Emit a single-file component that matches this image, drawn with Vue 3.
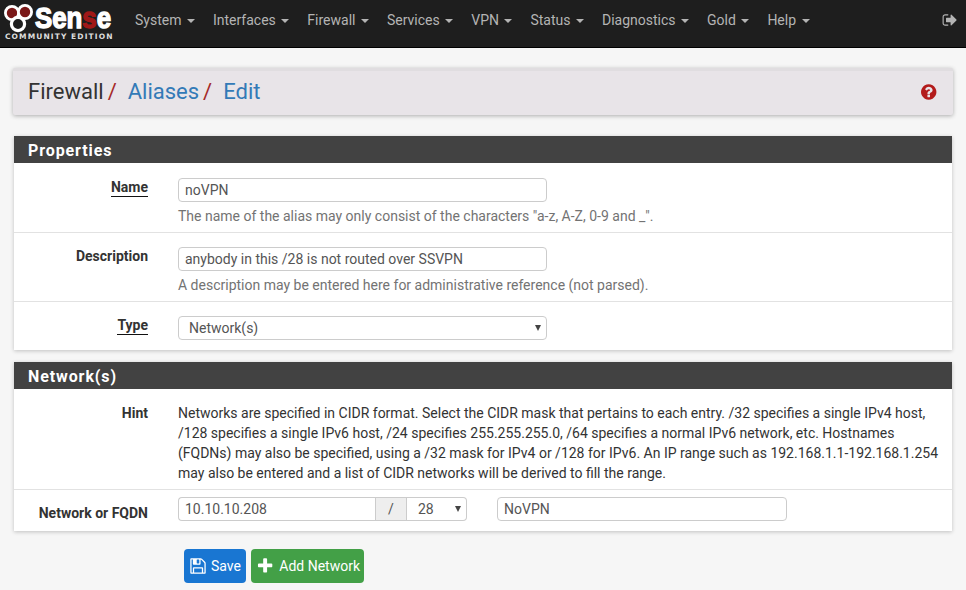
<script setup>
const menus = ['System', 'Interfaces', 'Firewall', 'Services', 'VPN', 'Status', 'Diagnostics', 'Gold', 'Help']
</script>

<template>
  <div class="page">
    <header class="navbar">
      <a class="brand">
        <span class="logo-top">
          <svg class="gears" viewBox="0 0 30 30" width="30" height="30">
            <circle cx="8" cy="10" r="6.6" fill="#7a1818" stroke="#fff" stroke-width="2.8" />
            <circle cx="21" cy="9" r="6.6" fill="#7a1818" stroke="#fff" stroke-width="2.8" />
            <circle cx="14" cy="21" r="6.6" fill="#1e1e1e" stroke="#fff" stroke-width="3.2" />
          </svg>
          <span class="wordmark">Sen<i>s</i>e</span>
        </span>
        <span class="edition">COMMUNITY EDITION</span>
      </a>
      <nav class="menu">
        <a v-for="m in menus" :key="m" class="item">{{ m }}<b class="caret"></b></a>
      </nav>
      <svg class="logout" viewBox="0 0 1792 1792" width="16" height="16" fill="#b4b4b4">
        <path d="M704 1440q0 4 1 20t.5 26.5-3 23.5-10 19.5-20.5 6.5h-320q-119 0-203.5-84.5t-84.5-203.5v-704q0-119 84.5-203.5t203.5-84.5h320q13 0 22.5 9.5t9.5 22.5q0 4 1 20t.5 26.5-3 23.5-10 19.5-20.5 6.5h-320q-66 0-113 47t-47 113v704q0 66 47 113t113 47h312l11.5 1 11.5 3 8 5.5 7 9 2 13.5zm928-544q0 26-19 45l-544 544q-19 19-45 19t-45-19-19-45v-288h-448q-26 0-45-19t-19-45v-384q0-26 19-45t45-19h448v-288q0-26 19-45t45-19 45 19l544 544q19 19 19 45z" />
      </svg>
    </header>

    <main class="container">
      <div class="crumbs">
        <h1>
          <span>Firewall</span><em>/</em><a>Aliases</a><em>/</em><a>Edit</a>
        </h1>
        <svg viewBox="0 0 1792 1792" width="18" height="18" fill="#b31b1b">
          <path d="M896 1376v-192q0-14-9-23t-23-9h-192q-14 0-23 9t-9 23v192q0 14 9 23t23 9h192q14 0 23-9t9-23zm256-672q0-88-55.5-163t-138.5-116-170-41q-243 0-371 213-15 24 8 42l132 100q7 6 19 6 16 0 25-12 53-68 86-92 34-24 86-24 48 0 85.5 26t37.5 59q0 38-20 61t-68 45q-63 28-115.5 86.5t-52.5 125.5v36q0 14 9 23t23 9h192q14 0 23-9t9-23q0-19 21.5-49.5t54.5-49.5q32-18 49-28.5t46-35 44.5-48 28-60.5 12.5-81zm384 192q0 209-103 385.5t-279.5 279.5-385.5 103-385.5-103-279.5-279.5-103-385.5 103-385.5 279.5-279.5 385.5-103 385.5 103 279.5 279.5 103 385.5z" />
        </svg>
      </div>

      <section class="panel">
        <h2>Properties</h2>
        <div class="row tall">
          <label class="lbl req">Name</label>
          <div class="field">
            <input class="ctl wide" value="noVPN" />
            <p class="help">The name of the alias may only consist of the characters "a-z, A-Z, 0-9 and _".</p>
          </div>
        </div>
        <div class="row tall">
          <label class="lbl desc">Description</label>
          <div class="field">
            <input class="ctl wide" value="anybody in this /28 is not routed over SSVPN" />
            <p class="help">A description may be entered here for administrative reference (not parsed).</p>
          </div>
        </div>
        <div class="row short">
          <label class="lbl req">Type</label>
          <div class="field">
            <div class="sel type"><select class="ctl wide"><option>Network(s)</option></select></div>
          </div>
        </div>
      </section>

      <section class="panel second">
        <h2>Network(s)</h2>
        <div class="row hint">
          <label class="lbl">Hint</label>
          <div class="field hint-text">Networks are specified in CIDR format. Select the CIDR mask that pertains to each entry. /32 specifies a single IPv4 host, /128 specifies a single IPv6 host, /24 specifies 255.255.255.0, /64 specifies a normal IPv6 network, etc. Hostnames (FQDNs) may also be specified, using a /32 mask for IPv4 or /128 for IPv6. An IP range such as 192.168.1.1-192.168.1.254 may also be entered and a list of CIDR networks will be derived to fill the range.</div>
        </div>
        <div class="row net">
          <label class="lbl">Network or FQDN</label>
          <div class="net-field">
            <div class="group">
              <input class="ctl addr" value="10.10.10.208" />
              <span class="addon">/</span>
              <div class="sel"><select class="ctl mask"><option>28</option></select></div>
            </div>
            <input class="ctl descr" value="NoVPN" />
          </div>
        </div>
      </section>

      <div class="actions">
        <button class="btn save">
          <svg viewBox="0 0 1792 1792" width="18" height="18" fill="#fff">
            <path d="M512 1536h768v-384h-768v384zm896 0h128v-896q0-14-10-38.5t-20-34.5l-281-281q-10-10-34-20t-39-10v416q0 40-28 68t-68 28h-576q-40 0-68-28t-28-68v-416h-128v1280h128v-416q0-40 28-68t68-28h832q40 0 68 28t28 68v416zm-384-928v-320q0-13-9.5-22.5t-22.5-9.5h-192q-13 0-22.5 9.5t-9.5 22.5v320q0 13 9.5 22.5t22.5 9.5h192q13 0 22.5-9.5t9.5-22.5zm640 32v928q0 40-28 68t-68 28h-1344q-40 0-68-28t-28-68v-1344q0-40 28-68t68-28h928q40 0 88 20t76 48l280 280q28 28 48 76t20 88z" />
          </svg>
          Save
        </button>
        <button class="btn add">
          <svg viewBox="0 0 1792 1792" width="20" height="20" fill="#fff">
            <path d="M1600 736v192q0 40-28 68t-68 28h-416v416q0 40-28 68t-68 28h-192q-40 0-68-28t-28-68v-416h-416q-40 0-68-28t-28-68v-192q0-40 28-68t68-28h416v-416q0-40 28-68t68-28h192q40 0 68 28t28 68v416h416q40 0 68 28t28 68z" />
          </svg>
          Add Network
        </button>
      </div>
    </main>
  </div>
</template>

<style>
html, body { margin: 0; background: #f5f5f5; }
</style>

<style scoped>
.page {
  height: 590px;
  overflow: hidden;
  background: #f6f6f6;
  font-family: Roboto, "Liberation Sans", sans-serif;
  font-size: 14px;
  color: #333;
}
.navbar {
  box-sizing: border-box;
  height: 48px;
  display: flex;
  align-items: center;
  background: #1e1e1e;
  border-bottom: 1px solid #000;
  padding: 0 8px 8px 4px;
}
.brand {
  width: 122px;
  align-self: flex-start;
  display: flex;
  flex-direction: column;
  color: #fff;
  padding-top: 3px;
}
.logo-top { display: flex; align-items: flex-start; height: 30px; }
.gears { flex: none; margin-right: 1px; }
.wordmark {
  display: inline-block;
  margin-top: -2px;
  height: 34px;
  font-family: "Liberation Sans", sans-serif;
  font-weight: 700;
  font-size: 30px;
  line-height: 34px;
  transform: scaleX(0.86);
  transform-origin: left center;
  -webkit-text-stroke: 1.4px #fff;
}
.wordmark i { font-style: normal; color: #a01818; -webkit-text-stroke: 1.4px #a01818; }
.edition {
  font-family: "DejaVu Sans", sans-serif;
  font-weight: 700;
  font-size: 7.5px;
  line-height: 9px;
  letter-spacing: 1.1px;
  margin: -1.5px 0 0 1px;
  white-space: nowrap;
  color: #ddd;
}
.menu { display: flex; flex: 1; }
.item { color: #b4b4b4; padding: 0 9px; white-space: nowrap; line-height: 20px; }
.caret {
  display: inline-block;
  margin-left: 5.5px;
  vertical-align: middle;
  border-top: 4px solid #b4b4b4;
  border-left: 4px solid transparent;
  border-right: 4px solid transparent;
}
.logout { flex: none; }

.container { padding: 0 14px; }
.crumbs {
  box-sizing: border-box;
  height: 47px;
  margin: 20px -1px 0;
  padding: 0 14px 3px 15px;
  display: flex;
  align-items: center;
  justify-content: space-between;
  background: #e8e4e8;
  border-top: 3px solid #e0dde0;
  border-radius: 2px;
  box-shadow: 0 1px 4px rgba(0, 0, 0, .3);
}
h1 { margin: 0; font-size: 22px; line-height: 26px; font-weight: 400; color: #333; }
h1 em { font-style: normal; color: #a52a2a; font-size: 22px; margin: 0 11px 0 4px; }
h1 a { color: #337ab7; }
.panel {
  margin-top: 21px;
  background: #fff;
  box-shadow: 0 1px 4px rgba(0, 0, 0, .22);
}
.panel.second { margin-top: 12px; }
h2 {
  margin: 0;
  height: 27px;
  padding: 0 14px;
  font-size: 16px;
  line-height: 29px;
  font-weight: 700;
  letter-spacing: .9px;
  color: #fff;
  background: #424242;
}
.row {
  box-sizing: border-box;
  display: grid;
  grid-template-columns: 134px 1fr;
  column-gap: 30px;
  border-top: 1px solid #e2e2e2;
}
h2 + .row { border-top: 1px solid #fff; }
.row.tall { height: 69px; padding-top: 14px; }
.row.short { height: 49px; padding-top: 14px; }
.row.hint { height: 100px; padding-top: 13px; }
.row.net { height: 42px; padding-top: 7px; }
.lbl { text-align: right; font-weight: 700; color: #333; line-height: 20px; }
.desc { margin-top: -1px; }
.req {
  justify-self: end;
  align-self: start;
  line-height: 17px;
  margin-top: 1px;
  border-bottom: 1px solid #111;
}
.net .lbl { padding-top: 6px; }
.ctl {
  box-sizing: border-box;
  height: 24px;
  padding: 0 6px;
  font: 14px Roboto, "Liberation Sans", sans-serif;
  color: #555;
  background: #fff;
  border: 1px solid #ccc;
  border-radius: 4px;
  outline: 0;
}
select.ctl { appearance: none; }
.sel { position: relative; }
.sel.type { width: 369px; }
.sel::after {
  content: "";
  position: absolute;
  right: 6px;
  top: 9px;
  border-top: 6px solid #444;
  border-left: 3.5px solid transparent;
  border-right: 3.5px solid transparent;
  pointer-events: none;
}
.wide { width: 369px; display: block; padding-left: 10px; }
input.wide { padding-left: 6px; }
.help { margin: 4px 0 0; line-height: 20px; color: #737373; }
.hint-text { line-height: 20px; color: #333; padding-right: 10px; }
.net-field { display: flex; }
.group { display: flex; }
.addr { width: 197px; border-radius: 4px 0 0 4px; border-right: 0; }
.addon {
  box-sizing: border-box;
  width: 32px;
  height: 24px;
  text-align: center;
  line-height: 22px;
  color: #555;
  background: #eee;
  border: 1px solid #ccc;
}
.mask { display: block; width: 60px; border-left: 0; border-radius: 0 4px 4px 0; padding-left: 11px; }
.descr { width: 290px; margin-left: 30px; }
.actions { display: flex; gap: 5px; margin: 18px 0 0 170px; }
.btn {
  box-sizing: border-box;
  height: 34px;
  display: flex;
  align-items: center;
  gap: 5px;
  padding: 0 4px 0 5px;
  font: 14px Roboto, "Liberation Sans", sans-serif;
  white-space: nowrap;
  color: #fff;
  border: 0;
  border-radius: 4px;
}
.save { width: 62px; background: #1976d2; gap: 4px; }
.add { width: 113px; background: #43a047; gap: 5px; }
</style>
